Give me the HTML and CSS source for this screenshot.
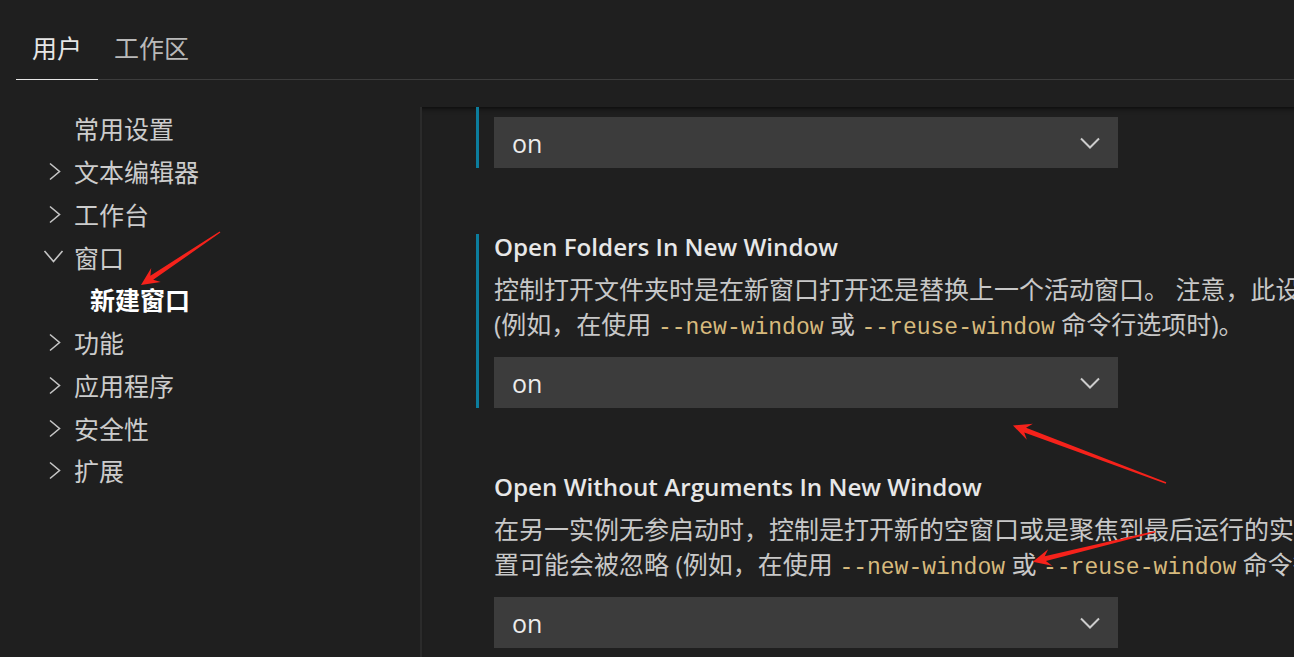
FILE: index.html
```html
<!DOCTYPE html>
<html lang="zh-CN">
<head>
<meta charset="utf-8">
<title>设置</title>
<link rel="stylesheet" href="styles.css">
</head>
<body>
<div class="app">
  <div class="tabs">
    <div class="tab active">用户</div>
    <div class="tab">工作区</div>
    <div class="tab-fill"></div>
  </div>
  <div class="main">
    <nav class="toc">
      <div class="toc-item"><span class="twist"></span><span>常用设置</span></div>
      <div class="toc-item"><span class="twist"><svg width="24" height="24" viewBox="0 0 24 24"><polyline points="8,4.5 17.5,12.5 8,20.5"/></svg></span><span>文本编辑器</span></div>
      <div class="toc-item"><span class="twist"><svg width="24" height="24" viewBox="0 0 24 24"><polyline points="8,4.5 17.5,12.5 8,20.5"/></svg></span><span>工作台</span></div>
      <div class="toc-item"><span class="twist"><svg width="24" height="24" viewBox="0 0 24 24"><polyline points="2.5,6 11.5,16.5 20.5,6"/></svg></span><span>窗口</span></div>
      <div class="toc-item child"><span>新建窗口</span></div>
      <div class="toc-item"><span class="twist"><svg width="24" height="24" viewBox="0 0 24 24"><polyline points="8,4.5 17.5,12.5 8,20.5"/></svg></span><span>功能</span></div>
      <div class="toc-item"><span class="twist"><svg width="24" height="24" viewBox="0 0 24 24"><polyline points="8,4.5 17.5,12.5 8,20.5"/></svg></span><span>应用程序</span></div>
      <div class="toc-item"><span class="twist"><svg width="24" height="24" viewBox="0 0 24 24"><polyline points="8,4.5 17.5,12.5 8,20.5"/></svg></span><span>安全性</span></div>
      <div class="toc-item"><span class="twist"><svg width="24" height="24" viewBox="0 0 24 24"><polyline points="8,4.5 17.5,12.5 8,20.5"/></svg></span><span>扩展</span></div>
    </nav>
    <section class="pane">
      <div class="pane-head"></div>
      <div class="scroll">
        <div class="setting modified first">
          <div class="select"><span>on</span><svg class="chev" width="20" height="12" viewBox="0 0 20 12"><polyline points="1,1.5 10,10.5 19,1.5"/></svg></div>
        </div>
        <div class="setting modified">
          <div class="title">Open Folders In New Window</div>
          <div class="desc">控制打开文件夹时是在新窗口打开还是替换上一个活动窗口。 注意，此设置可能会被忽略 (例如，在使用 <code>--new-window</code> 或 <code>--reuse-window</code> 命令行选项时)。</div>
          <div class="select"><span>on</span><svg class="chev" width="20" height="12" viewBox="0 0 20 12"><polyline points="1,1.5 10,10.5 19,1.5"/></svg></div>
        </div>
        <div class="setting">
          <div class="title">Open Without Arguments In New Window</div>
          <div class="desc">在另一实例无参启动时，控制是打开新的空窗口或是聚焦到最后运行的实例。 注意，此设置可能会被忽略 (例如，在使用 <code>--new-window</code> 或 <code>--reuse-window</code> 命令行选项时)。</div>
          <div class="select"><span>on</span><svg class="chev" width="20" height="12" viewBox="0 0 20 12"><polyline points="1,1.5 10,10.5 19,1.5"/></svg></div>
        </div>
      </div>
    </section>
  </div>
</div>
<svg class="annot" width="1294" height="657" viewBox="0 0 1294 657">
  <polygon points="219.61,231.42 150.41,275.68 151.21,267.91 141,285 160.69,282.03 153.19,279.84 220.39,232.58"/>
  <polygon points="1166.25,482.34 1026.05,427.73 1032.84,423.87 1013,425.5 1026.86,439.79 1024.29,432.41 1165.75,483.66"/>
  <polygon points="1154.83,531.02 1044.73,556.17 1048.16,549.15 1032.7,561.7 1052.2,565.67 1045.93,561.03 1155.17,532.38"/>
</svg>
</body>
</html>
```
FILE: styles.css
```css
html, body {
  margin: 0;
  padding: 0;
  background: #1f1f1f;
  width: 1294px;
  height: 657px;
  overflow: hidden;
}

body {
  position: relative;
  font-family: "Open Sans", "Noto Sans CJK SC", sans-serif;
  font-size: 25px;
  color: #cccccc;
}

.app {
  display: flex;
  flex-direction: column;
  height: 657px;
}

.tabs {
  display: flex;
  height: 80px;
  flex: none;
}

.tab {
  padding: 29px 16px 0;
  line-height: 36px;
  height: 50px;
  color: #b9b9b9;
  border-bottom: 1px solid #3c3c3c;
  font-family: "Noto Sans CJK SC", sans-serif;
}

.tab.active {
  color: #e6e6e6;
  border-bottom-color: #e6e6e6;
  margin-left: 16px;
}

.tab-fill {
  flex: 1;
  border-bottom: 1px solid #3c3c3c;
}

.main {
  display: flex;
  flex: 1;
  min-height: 0;
}

.toc {
  width: 420px;
  flex: none;
  padding-top: 27px;
  font-family: "Noto Sans CJK SC", sans-serif;
}

.toc-item {
  display: flex;
  align-items: center;
  height: 42.75px;
  padding-left: 42px;
  gap: 8px;
  color: #cccccc;
}

.twist {
  width: 24px;
  height: 24px;
  flex: none;
}

.twist svg {
  display: block;
  fill: none;
  stroke: #c5c5c5;
  stroke-width: 1.6;
}

.toc-item.child {
  padding-left: 90px;
  color: #ffffff;
  font-weight: 700;
}

.pane {
  flex: 1;
  display: flex;
  flex-direction: column;
  min-width: 0;
}

.pane-head {
  height: 27px;
  flex: none;
}

.scroll {
  flex: 1;
  border-left: 2px solid #2b2b2b;
  box-shadow: inset 0 6px 6px -6px #000000;
  overflow: hidden;
  padding-left: 54px;
}

.setting {
  border-left: 3px solid transparent;
  padding-left: 15px;
  margin-top: 66px;
}

.setting.modified {
  border-left-color: #0c7d9d;
}

.setting.first {
  margin-top: 0;
  padding-top: 10px;
}

.title {
  font-weight: 600;
  font-size: 24.2px;
  color: #e7e7e7;
  line-height: 26px;
  margin-bottom: 11.5px;
  white-space: nowrap;
}

.desc {
  width: 995px;
  line-height: 35px;
  color: #c8c8c8;
  margin-bottom: 15.5px;
}

.desc code {
  font-family: "Liberation Mono", monospace;
  font-size: 23px;
  line-height: 1;
  color: #d7ba7d;
}

.select {
  width: 624px;
  height: 51px;
  box-sizing: border-box;
  background: #3c3c3c;
  display: flex;
  align-items: center;
  justify-content: space-between;
  padding: 0 18px;
  color: #ececec;
}

.chev {
  display: block;
  fill: none;
  stroke: #cccccc;
  stroke-width: 2;
}

.annot {
  position: absolute;
  left: 0;
  top: 0;
  pointer-events: none;
  fill: #f5221b;
}
```
